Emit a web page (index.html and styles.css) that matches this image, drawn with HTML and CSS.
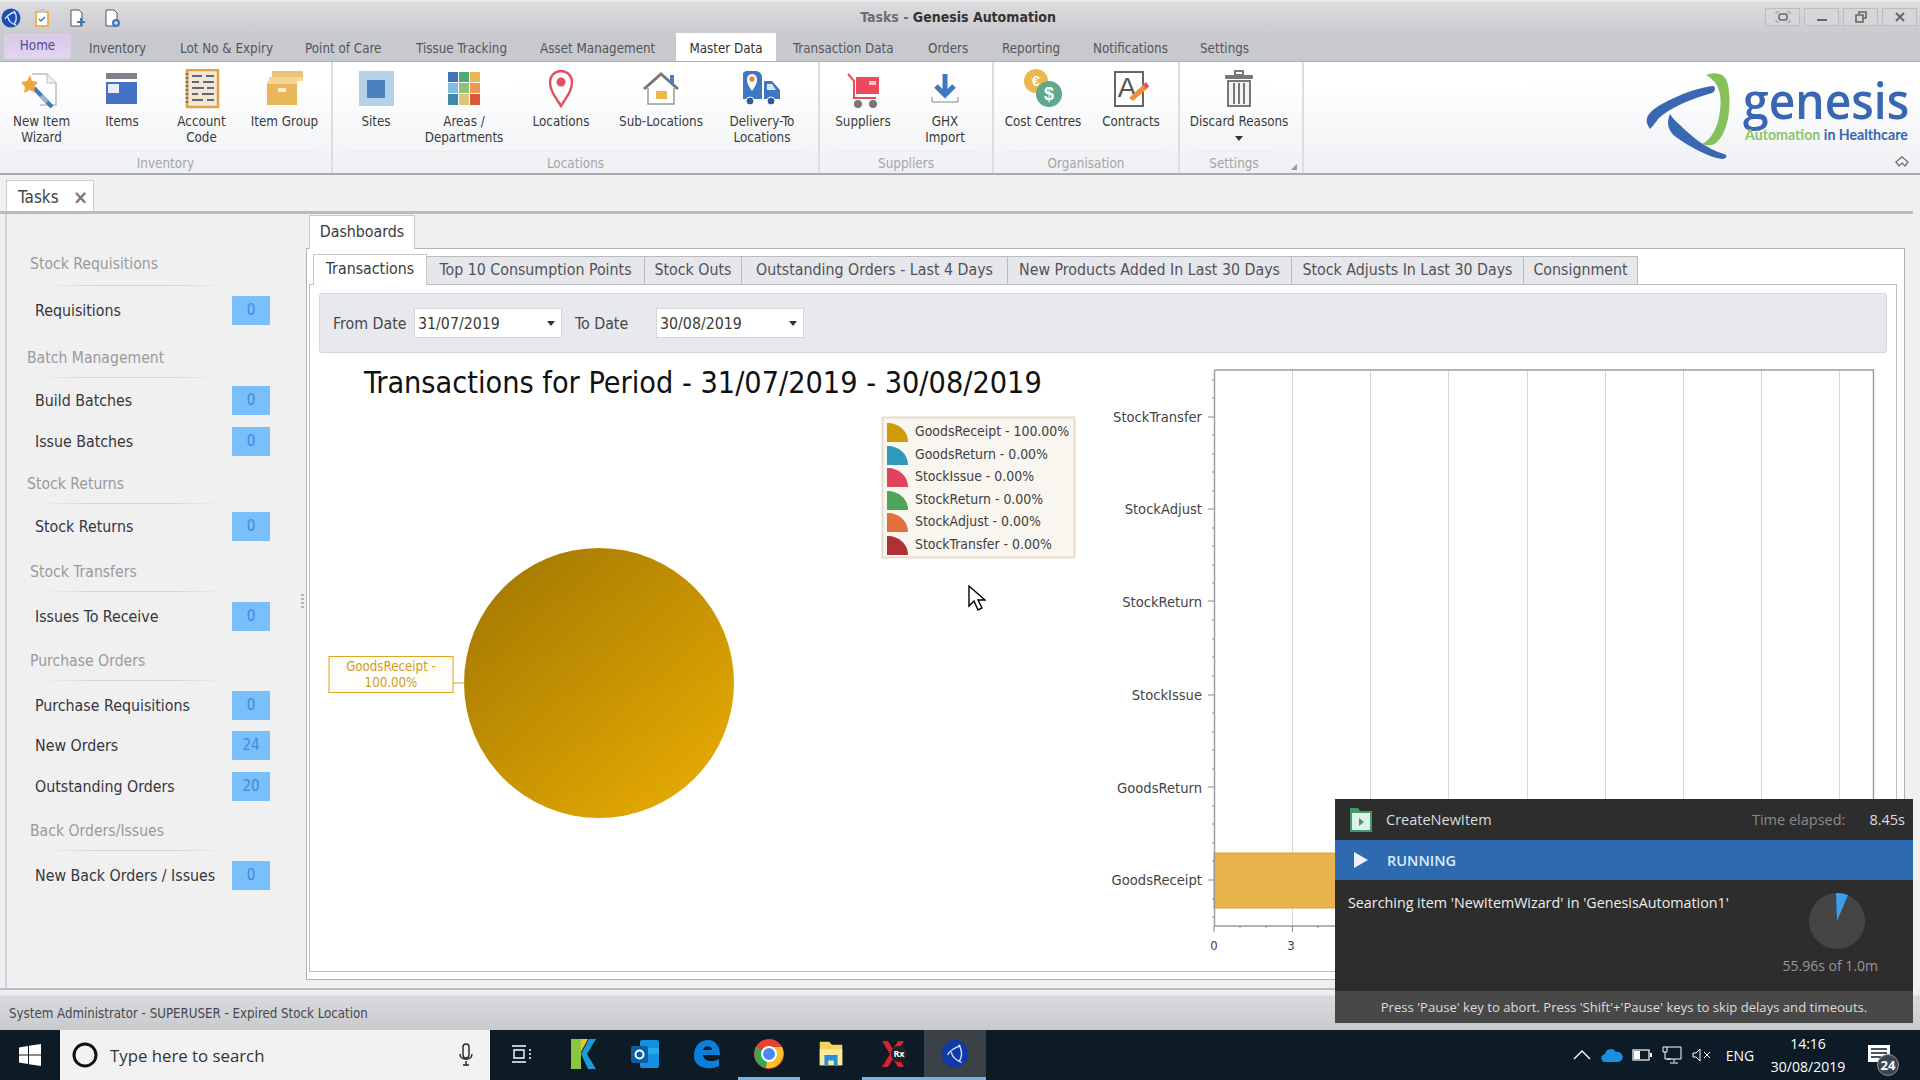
FILE: index.html
```html
<!DOCTYPE html>
<html lang="en">
<head>
	<meta charset="UTF-8" />
	<title>Tasks - Genesis Automation</title>
	<link rel="stylesheet" href="styles.css">
</head>
<body>
<div class="app">
	<!-- window title -->
	<header class="titlebar">
		<div class="qat">
			<svg class="qat-icon" viewBox="0 0 20 20"><circle cx="10" cy="10" r="9.5" fill="#1c4fb0"/><path d="M14 4C10 5 6 8 4 11M7 9c0 4 4 7 8 8M13 3c3 4 3 10 0 13" fill="none" stroke="#dfe9ff" stroke-width="1.3"/></svg>
			<svg class="qat-icon" viewBox="0 0 20 20"><rect x="4" y="4" width="12" height="14" fill="#fff" stroke="#e8b45c" stroke-width="2"/><rect x="7" y="1" width="6" height="4" fill="#c9c9c9"/><path d="m7 11 2 2 4-4" fill="none" stroke="#3f78c2" stroke-width="1.5"/></svg>
			<svg class="qat-icon" viewBox="0 0 20 20"><path d="M4 2h8l3 3v13H4z" fill="#fff" stroke="#555"/><path d="M14 10v8M10 14h8" stroke="#3f78c2" stroke-width="2"/></svg>
			<svg class="qat-icon" viewBox="0 0 20 20"><path d="M4 2h8l3 3v13H4z" fill="#fff" stroke="#555"/><circle cx="14" cy="15" r="4" fill="#3f78c2"/><path d="M14 13v4M12 15h4" stroke="#fff"/></svg>
		</div>
		<div class="wintitle"><span class="wintitle-doc">Tasks - </span>Genesis Automation</div>
		<div class="winbtns">
			<button class="winbtn"><svg viewBox="0 0 16 12" width="16" height="12"><rect x="4" y="3" width="8" height="6" rx="2" fill="none" stroke="#666" stroke-width="1.5"/><path d="M1 3V1h3M12 1h3v2M15 9v2h-3M4 11H1V9" fill="none" stroke="#999"/></svg></button>
			<button class="winbtn"><svg viewBox="0 0 16 12" width="16" height="12"><path d="M3 9h10" stroke="#666" stroke-width="2"/></svg></button>
			<button class="winbtn"><svg viewBox="0 0 16 12" width="16" height="12"><path d="M6 3V1h7v6h-3M3 4h7v7H3z" fill="none" stroke="#666" stroke-width="1.6"/></svg></button>
			<button class="winbtn"><svg viewBox="0 0 16 12" width="16" height="12"><path d="m4 2 8 8M12 2l-8 8" stroke="#666" stroke-width="2"/></svg></button>
		</div>
	</header>

	<nav class="menutabs">
		<a class="mtab mtab-home">Home</a>
		<a class="mtab mt-inv">Inventory</a>
		<a class="mtab mt-lot">Lot No &amp; Expiry</a>
		<a class="mtab mt-poc">Point of Care</a>
		<a class="mtab mt-tis">Tissue Tracking</a>
		<a class="mtab mt-ast">Asset Management</a>
		<a class="mtab mtab-active">Master Data</a>
		<a class="mtab mt-trn">Transaction Data</a>
		<a class="mtab mt-ord">Orders</a>
		<a class="mtab mt-rep">Reporting</a>
		<a class="mtab mt-not">Notifications</a>
		<a class="mtab mt-set">Settings</a>
	</nav>

	<section class="ribbon">
		<div class="rgroup rg-inventory">
			<div class="ritems">
				<div class="ritem">
					<svg class="ricon" viewBox="0 0 44 40"><path d="M12 5h15l9 9v22H20" fill="#fff" stroke="#bdbdbd" stroke-width="1.5"/><path d="M27 5v9h9" fill="#eee" stroke="#bdbdbd"/><path d="m14 19 18 19" stroke="#3e78bd" stroke-width="4"/><path d="m21 27 6 6" stroke="#9fb4cc" stroke-width="4"/><path d="m10 6 2 6 6 1-4 5 1 6-5-3-6 3 1-6-4-5 6-1z" fill="#f0a63c"/></svg>
					<span>New Item<br>Wizard</span>
				</div>
				<div class="ritem">
					<svg class="ricon" viewBox="0 0 44 40"><rect x="6" y="4" width="31" height="6" fill="#7d8288"/><rect x="6" y="13" width="31" height="22" fill="#4472c4"/><rect x="8" y="15" width="11" height="9" fill="#e6eefa"/></svg>
					<span>Items</span>
				</div>
				<div class="ritem">
					<svg class="ricon" viewBox="0 0 44 40"><rect x="7" y="1" width="31" height="37" fill="#f4e6d2" stroke="#e2a24c" stroke-width="2.5"/><g stroke="#5b6a78" stroke-width="2"><path d="M12 7h10M26 7h8M12 13h7M23 13h11M12 19h12M27 19h7M12 25h6M22 25h12M12 31h11M27 31h7"/></g><path d="M7 4v32" stroke="#8a7a60" stroke-width="3" stroke-dasharray="2 2"/></svg>
					<span>Account<br>Code</span>
				</div>
				<div class="ritem">
					<svg class="ricon" viewBox="0 0 44 40"><rect x="9" y="2" width="31" height="6" fill="#eec272"/><rect x="6" y="8" width="34" height="4" fill="#f4d596"/><rect x="4" y="12" width="30" height="24" fill="#e9b65a"/><rect x="4" y="12" width="30" height="3" fill="#f4d596"/><rect x="15" y="19" width="8" height="4" fill="#fbeccd"/></svg>
					<span>Item Group</span>
				</div>
			</div>
			<div class="rlabel">Inventory</div>
		</div>

		<div class="rgroup rg-locations">
			<div class="ritems">
				<div class="ritem">
					<svg class="ricon" viewBox="0 0 44 40"><rect x="5" y="2" width="35" height="35" fill="#b6d0e8"/><rect x="13" y="11" width="18" height="18" fill="#4a80bb"/></svg>
					<span>Sites</span>
				</div>
				<div class="ritem">
					<svg class="ricon" viewBox="0 0 44 40"><g><rect x="6" y="3" width="10" height="10" fill="#3f74b5"/><rect x="17" y="3" width="10" height="10" fill="#4fa77c"/><rect x="28" y="3" width="10" height="10" fill="#eab84f"/><rect x="6" y="14" width="10" height="10" fill="#82bcd8"/><rect x="17" y="14" width="10" height="10" fill="#8cc27a"/><rect x="28" y="14" width="10" height="10" fill="#ee9a52"/><rect x="6" y="25" width="10" height="11" fill="#3e8aa6"/><rect x="17" y="25" width="10" height="11" fill="#d8c878"/><rect x="28" y="25" width="10" height="11" fill="#d9583a"/></g></svg>
					<span>Areas /<br>Departments</span>
				</div>
				<div class="ritem">
					<svg class="ricon" viewBox="0 0 44 40"><path d="M22 37C15 26 11 21 11 13a11 11 0 0 1 22 0c0 8-4 13-11 24z" fill="#fff" stroke="#e4505f" stroke-width="2.4"/><circle cx="22" cy="13" r="4.5" fill="#e4505f"/></svg>
					<span>Locations</span>
				</div>
				<div class="ritem">
					<svg class="ricon" viewBox="0 0 44 40"><path d="M5 20 22 5l17 15" fill="none" stroke="#777" stroke-width="3"/><path d="M9 19v16h26V19" fill="#fff" stroke="#999" stroke-width="1.5"/><rect x="31" y="6" width="4" height="9" fill="#4a80bb"/><rect x="17" y="22" width="11" height="8" fill="#eab84f"/></svg>
					<span>Sub-Locations</span>
				</div>
				<div class="ritem">
					<svg class="ricon" viewBox="0 0 44 40"><path d="M3 4a7 7 0 0 1 7-2h6a6 6 0 0 1 6 6v22H3z" fill="#3f78c2"/><path d="M24 12h8l8 9v9H24z" fill="#3f78c2"/><path d="M27 15h5l4 6h-9z" fill="#d9e6f5"/><circle cx="10" cy="32" r="4" fill="#2f5d99" stroke="#fff"/><circle cx="31" cy="32" r="4" fill="#2f5d99" stroke="#fff"/><path d="M12 22C8 16 7 14 7 10a5 5 0 0 1 10 0c0 4-1 6-5 12z" fill="#f7f7f7"/><circle cx="12" cy="10" r="2.6" fill="#e8803a"/></svg>
					<span>Delivery-To<br>Locations</span>
				</div>
			</div>
			<div class="rlabel">Locations</div>
		</div>

		<div class="rgroup rg-suppliers">
			<div class="ritems">
				<div class="ritem">
					<svg class="ricon" viewBox="0 0 44 40"><path d="M7 5l6 7v17h22" fill="none" stroke="#ea4a5c" stroke-width="2"/><rect x="15" y="8" width="23" height="17" fill="#ea4a5c"/><rect x="28" y="12" width="7" height="4" fill="#f7c4ca"/><circle cx="17" cy="35" r="4" fill="#777"/><circle cx="32" cy="35" r="4" fill="#777"/></svg>
					<span>Suppliers</span>
				</div>
				<div class="ritem">
					<svg class="ricon" viewBox="0 0 44 40"><path d="M22 5v20M13 17l9 9 9-9" fill="none" stroke="#3f78c2" stroke-width="5"/><path d="M9 28v5h26v-5" fill="none" stroke="#888"/></svg>
					<span>GHX<br>Import</span>
				</div>
			</div>
			<div class="rlabel">Suppliers</div>
		</div>

		<div class="rgroup rg-org">
			<div class="ritems">
				<div class="ritem">
					<svg class="ricon" viewBox="0 0 44 40"><circle cx="15" cy="12" r="12" fill="#eab84f"/><text x="15" y="17" class="coin-text">€</text><circle cx="28" cy="25" r="13" fill="#5fa88c"/><text x="28" y="31" class="coin-text coin-big">$</text></svg>
					<span>Cost Centres</span>
				</div>
				<div class="ritem">
					<svg class="ricon" viewBox="0 0 44 40"><rect x="6" y="3" width="28" height="34" fill="#fff" stroke="#666" stroke-width="2"/><text x="18" y="28" class="doc-a">A</text><path d="m20 29 16-15 4 4-16 14z" fill="#f0903c"/><path d="m34 16 3-3 3 4-3 3z" fill="#e4505f"/></svg>
					<span>Contracts</span>
				</div>
			</div>
			<div class="rlabel">Organisation</div>
		</div>

		<div class="rgroup rg-settings">
			<div class="ritems">
				<div class="ritem">
					<svg class="ricon" viewBox="0 0 44 40"><rect x="18" y="2" width="8" height="4" fill="none" stroke="#777" stroke-width="2"/><rect x="8" y="6" width="28" height="4" rx="1" fill="#777"/><path d="M11 12h22v25H11z" fill="#f4f4f4" stroke="#777" stroke-width="2"/><path d="M17 14v21M22 14v21M27 14v21" stroke="#777" stroke-width="2"/></svg>
					<span>Discard Reasons<i class="caret"></i></span>
				</div>
			</div>
			<div class="rlabel">Settings</div>
			<svg class="launcher" viewBox="0 0 6 6"><path d="M6 0v6H0z" fill="#999"/></svg>
		</div>

		<svg class="logo" viewBox="1640 50 276 110">
			<path d="M1647 117c3-12 43-29 65-32 4-1 4 5 0 7-22 6-44 16-54 26-4 6-8 10-8 10-3-4-4-8-3-11z" fill="#3a67b1"/>
			<path d="M1670 113c-4 9-2 17 6 23 14 10 32 20 46 22 5 0 6-4 2-5-18-5-34-19-44-29-5-4-8-8-10-11z" fill="#3a67b1"/>
			<path d="M1706 74c10-4 20-2 22 10 4 21 0 46-10 56-4 5-10 5-16 3 10-5 16-17 18-33 2-15 0-28-14-36z" fill="#86c05a"/>
			<text transform="translate(1743 118) scale(.925 1)" class="logo-name">genesis</text>
			<text x="1745" y="139" class="logo-tag"><tspan class="logo-green">Automation</tspan> in Healthcare</text>
		</svg>
		<svg class="collapse" viewBox="0 0 14 12"><path d="m1 6 6-5 6 5-3 4-3-3-3 3z" fill="none" stroke="#777" stroke-width="1.4"/></svg>
	</section>

	<div class="docbar">
		<div class="doctab"><span>Tasks</span><b class="doctab-x">×</b></div>
	</div>

	<main class="main">
		<aside class="sidebar">
			<section class="sb-group">
				<h3 class="sb-head">Stock Requisitions</h3>
				<div class="sb-row"><span>Requisitions</span><b class="badge">0</b></div>
			</section>
			<section class="sb-group">
				<h3 class="sb-head sb-out">Batch Management</h3>
				<div class="sb-row"><span>Build Batches</span><b class="badge">0</b></div>
				<div class="sb-row"><span>Issue Batches</span><b class="badge">0</b></div>
			</section>
			<section class="sb-group">
				<h3 class="sb-head sb-out">Stock Returns</h3>
				<div class="sb-row"><span>Stock Returns</span><b class="badge">0</b></div>
			</section>
			<section class="sb-group">
				<h3 class="sb-head sb-low">Stock Transfers</h3>
				<div class="sb-row"><span>Issues To Receive</span><b class="badge">0</b></div>
			</section>
			<section class="sb-group">
				<h3 class="sb-head sb-low">Purchase Orders</h3>
				<div class="sb-row"><span>Purchase Requisitions</span><b class="badge">0</b></div>
				<div class="sb-row"><span>New Orders</span><b class="badge">24</b></div>
				<div class="sb-row"><span>Outstanding Orders</span><b class="badge">20</b></div>
			</section>
			<section class="sb-group">
				<h3 class="sb-head sb-low">Back Orders/Issues</h3>
				<div class="sb-row"><span>New Back Orders / Issues</span><b class="badge">0</b></div>
			</section>
		</aside>
		<div class="splitter"><i></i><i></i><i></i><i></i></div>

		<div class="host">
			<div class="hosttab">Dashboards</div>
			<div class="hostpanel">
				<div class="subtabs">
					<div class="subtab subtab-active">Transactions</div>
					<div class="subtab st-top">Top 10 Consumption Points</div>
					<div class="subtab st-out">Stock Outs</div>
					<div class="subtab st-ord">Outstanding Orders - Last 4 Days</div>
					<div class="subtab st-new">New Products Added In Last 30 Days</div>
					<div class="subtab st-adj">Stock Adjusts In Last 30 Days</div>
					<div class="subtab st-con">Consignment</div>
				</div>
				<div class="subpanel">
					<div class="filters">
						<label class="flabel">From Date</label>
						<div class="datebox"><span>31/07/2019</span><i class="caret"></i></div>
						<label class="flabel flabel-to">To Date</label>
						<div class="datebox"><span>30/08/2019</span><i class="caret"></i></div>
					</div>
					<svg class="charts" width="1582" height="600" viewBox="314 360 1582 600">
						<text x="364" y="393" class="chart-title">Transactions for Period - 31/07/2019 - 30/08/2019</text>

						<defs>
							<linearGradient id="pieFill" x1="0.15" y1="0.1" x2="0.85" y2="0.9">
								<stop offset="0" stop-color="#a87c02"/>
								<stop offset="1" stop-color="#e3a802"/>
							</linearGradient>
						</defs>
						<circle cx="599" cy="683" r="135" fill="url(#pieFill)"/>
						<path d="M453 683h12" stroke="#dba520"/>
						<rect x="329" y="656.5" width="124" height="36" fill="#fffdf8" stroke="#dba520"/>
						<text x="391" y="671" class="pie-label">GoodsReceipt -</text>
						<text x="391" y="687" class="pie-label">100.00%</text>

						<rect x="882.5" y="417.5" width="192" height="140" fill="#f9f5ef" stroke="#e6dcc9" stroke-width="2"/>
						<g class="legend">
							<path d="M887 442v-19c12 0 21 8 21 19z" fill="#cf9a06"/><text x="915" y="436">GoodsReceipt - 100.00%</text>
							<path d="M887 465v-19c12 0 21 8 21 19z" fill="#2f9ab8"/><text x="915" y="459">GoodsReturn - 0.00%</text>
							<path d="M887 487v-19c12 0 21 8 21 19z" fill="#e0435c"/><text x="915" y="481">StockIssue - 0.00%</text>
							<path d="M887 510v-19c12 0 21 8 21 19z" fill="#4ca65a"/><text x="915" y="504">StockReturn - 0.00%</text>
							<path d="M887 532v-19c12 0 21 8 21 19z" fill="#e2703a"/><text x="915" y="526">StockAdjust - 0.00%</text>
							<path d="M887 555v-19c12 0 21 8 21 19z" fill="#b03038"/><text x="915" y="549">StockTransfer - 0.00%</text>
						</g>

						<g class="grid">
							<path d="M1292.5 370v556M1370.5 370v556M1448.5 370v556M1527.5 370v556M1605.5 370v556M1683.5 370v556M1761.5 370v556M1839.5 370v556"/>
						</g>
						<rect x="1214" y="853" width="400" height="55" fill="#e8b24c" stroke="#dc9f3a"/>
						<path d="M1214.5 370h659v556M1214.5 370v556h659" fill="none" stroke="#9a9a9a" stroke-width="1.4"/>
						<g class="ticks">
							<path d="M1208 417h6M1208 509h6M1208 601h6M1208 695h6M1208 787h6M1208 880h6M1214 926v6M1292.5 926v6"/>
							<path d="M1212 380h2M1212 398h2M1212 435h2M1212 454h2M1212 472h2M1212 491h2M1212 528h2M1212 546h2M1212 565h2M1212 583h2M1212 620h2M1212 639h2M1212 657h2M1212 676h2M1212 713h2M1212 732h2M1212 750h2M1212 769h2M1212 806h2M1212 824h2M1212 843h2M1212 861h2M1212 899h2M1212 917h2M1240 926v2M1266 926v2M1318 926v2"/>
						</g>
						<g class="axis-cat">
							<text x="1202" y="421.5">StockTransfer</text>
							<text x="1202" y="514">StockAdjust</text>
							<text x="1202" y="606.5">StockReturn</text>
							<text x="1202" y="700">StockIssue</text>
							<text x="1202" y="792.5">GoodsReturn</text>
							<text x="1202" y="885">GoodsReceipt</text>
						</g>
						<g class="axis-val">
							<text x="1214" y="950">0</text>
							<text x="1291" y="950">3</text>
						</g>
					</svg>
				</div>
			</div>
		</div>
	</main>

	<footer class="statusbar">System Administrator - SUPERUSER - Expired Stock Location</footer>

	<div class="taskbar">
		<div class="tb-start">
			<svg viewBox="0 0 22 22" width="22" height="22"><path d="M0 3.5 9 2v8.5H0zM10 1.8 22 0v10.5H10zM0 11.5h9V20l-9-1.5zM10 11.5h12V22l-12-1.8z" fill="#fff"/></svg>
		</div>
		<div class="tb-search">
			<svg viewBox="0 0 30 30" width="30" height="30"><circle cx="15" cy="15" r="11" fill="none" stroke="#111" stroke-width="3"/></svg>
			<span class="tb-search-text">Type here to search</span>
			<svg class="tb-mic" viewBox="0 0 16 24" width="16" height="24"><rect x="5" y="1" width="6" height="14" rx="3" fill="none" stroke="#222" stroke-width="1.4"/><path d="M2 11c0 7 12 7 12 0M8 18v4M5 22h6" fill="none" stroke="#222" stroke-width="1.4"/></svg>
		</div>
		<div class="tb-cell tb-view">
			<svg viewBox="0 0 24 24" width="24" height="24"><path d="M3 4h14M3 20h14M5 8h10v8H5zM20 8h2M20 12h2M20 16h2" fill="none" stroke="#fff" stroke-width="1.4"/></svg>
		</div>
		<div class="tb-cell">
			<svg viewBox="0 0 28 32" width="28" height="32"><path d="M2 1h10v30H2z" fill="#8cc63f"/><path d="M12 16 20 1h7l-9 15 9 15h-8z" fill="#1c9ad6"/><path d="M12 14 19 1h-7z" fill="#f2c230"/></svg>
		</div>
		<div class="tb-cell">
			<svg viewBox="0 0 32 32" width="32" height="32"><rect x="11" y="2" width="19" height="28" rx="2" fill="#1490df"/><path d="M11 10h19v6H11z" fill="#28a8ea"/><rect x="2" y="8" width="17" height="17" rx="2" fill="#0a5ea8"/><circle cx="10.5" cy="16.5" r="4" fill="none" stroke="#fff" stroke-width="2"/></svg>
		</div>
		<div class="tb-cell">
			<svg viewBox="0 0 32 32" width="32" height="34"><path d="M3 18C3 7 10 2 17 2c7 0 12 6 12 15H12c0 6 9 8 16 4v7c-10 5-25 2-25-10zm9-6h9c0-5-8-5-9 0z" fill="#0a7fdc"/></svg>
		</div>
		<div class="tb-cell tb-open">
			<svg viewBox="0 0 32 32" width="32" height="32"><circle cx="16" cy="16" r="15" fill="#e5432f"/><path d="M3 9a15 15 0 0 0 10 21l6-12z" fill="#35a853"/><path d="M13 30A15 15 0 0 0 29 9H16z" fill="#fbc02d"/><circle cx="16" cy="16" r="7" fill="#4a8af4" stroke="#fff" stroke-width="2"/></svg>
		</div>
		<div class="tb-cell">
			<svg viewBox="0 0 32 32" width="30" height="30"><path d="M4 3h10l3 3h11v22H4z" fill="#f3d35c"/><path d="M4 11h24v17H4z" fill="#fbe9a0"/><path d="M9 17h14v11h-4v-5h-6v5H9z" fill="#2b8edb"/></svg>
		</div>
		<div class="tb-cell tb-open">
			<svg viewBox="0 0 32 32" width="32" height="32"><path d="M5 3h6l5 8 5-8h6l-8 13 8 13h-6l-5-8-5 8H5l8-13z" fill="#d5222e"/><circle cx="22" cy="16" r="8" fill="#222"/><text x="22" y="19" class="rx-text">Rx</text></svg>
		</div>
		<div class="tb-cell tb-active">
			<svg viewBox="0 0 32 32" width="30" height="32"><ellipse cx="16" cy="16" rx="14" ry="15" fill="#0f3aa8"/><path d="M22 7C16 9 11 12 8 17M12 14c1 5 6 9 11 11M20 6c4 6 4 14 0 18" fill="none" stroke="#d9e6ff" stroke-width="1.4"/></svg>
		</div>
		<div class="tray">
			<div class="tray-cell"><svg viewBox="0 0 18 12" width="18" height="12"><path d="m1 10 8-8 8 8" fill="none" stroke="#fff" stroke-width="1.4"/></svg></div>
			<div class="tray-cell"><svg viewBox="0 0 22 14" width="22" height="14"><path d="M5 14a4 4 0 0 1-1-8 6 6 0 0 1 11-2 5 5 0 0 1 3 10z" fill="#1a8fe0"/></svg></div>
			<div class="tray-cell"><svg viewBox="0 0 20 12" width="20" height="12"><rect x="1" y="1" width="16" height="10" fill="none" stroke="#fff" stroke-width="1.2"/><rect x="2" y="2" width="6" height="8" fill="#fff"/><rect x="18" y="4" width="2" height="4" fill="#fff"/></svg></div>
			<div class="tray-cell"><svg viewBox="0 0 20 18" width="20" height="18"><path d="M5 1h14v12H5M1 1h4v5H1zM12 13v3M8 17h8M3 6v7h6" fill="none" stroke="#fff"/></svg></div>
			<div class="tray-cell"><svg viewBox="0 0 20 14" width="20" height="14"><path d="M1 5h3l4-4v12L4 9H1z" fill="none" stroke="#fff"/><path d="m12 4 6 6M18 4l-6 6" stroke="#fff"/></svg></div>
			<div class="tray-lang">ENG</div>
			<div class="tray-clock"><span>14:16</span><span>30/08/2019</span></div>
			<div class="tray-notif">
				<svg viewBox="0 0 22 20" width="22" height="20"><path d="M0 0h22v17H0z" fill="#fff"/><path d="M3 4h16M3 8h16M3 12h10" stroke="#0d1b26" stroke-width="1.5"/></svg>
				<b class="notif-count">24</b>
			</div>
		</div>
	</div>

	<!-- automation popup sits over the window -->
	<aside class="runner">
		<div class="runner-head">
			<svg viewBox="0 0 24 26" width="24" height="26"><path d="M1 1h8l2 3h12v21H1z" fill="#3f9c68"/><rect x="3" y="6" width="18" height="17" fill="#e0f2e7"/><path d="m10 11 5 4-5 4z" fill="#3f9c68"/></svg>
			<span class="runner-name">CreateNewItem</span>
			<span class="runner-elapsed">Time elapsed:</span>
			<span class="runner-time">8.45s</span>
		</div>
		<div class="runner-state">
			<svg viewBox="0 0 14 16" width="14" height="16"><path d="M0 0l14 8-14 8z" fill="#eaf2fb"/></svg>
			<span>RUNNING</span>
		</div>
		<div class="runner-body">
			<p class="runner-msg">Searching item 'NewItemWizard' in 'GenesisAutomation1'</p>
			<div class="runner-progress">
				<svg class="runner-pie" viewBox="0 0 56 56" width="56" height="56"><circle cx="28" cy="28" r="28" fill="#454545"/><path d="M28 28 27 0a28 28 0 0 1 12 2z" fill="#3aa0ee"/></svg>
				<span>55.96s of 1.0m</span>
			</div>
		</div>
		<div class="runner-foot">Press 'Pause' key to abort. Press 'Shift'+'Pause' keys to skip delays and timeouts.</div>
	</aside>

	<svg class="cursor" viewBox="0 0 18 26" width="18" height="26"><path d="M1 1v20l5-5 4 9 4-2-4-8h7z" fill="#fff" stroke="#000" stroke-width="1.4"/></svg>
</div>
</body>
</html>
```

FILE: styles.css
```css
* {
	box-sizing: border-box;
}

html,
body {
	margin: 0;
	height: 100%;
	overflow: hidden;
}

body {
	font-family: "DejaVu Sans Condensed", "DejaVu Sans", sans-serif;
	font-size: 13.3px;
	color: #3b3b3b;
}

.app {
	position: relative;
	width: 1920px;
	height: 1080px;
	display: flex;
	flex-direction: column;
	background: #f0f0f0;
}

/* title bar */
.titlebar {
	height: 33px;
	display: grid;
	grid-template-columns: 1fr auto 1fr;
	align-items: start;
	background: linear-gradient(#dcdcde, #cbcbd0);
	border-top: 2px solid #e8e8ea;
}

.qat {
	display: flex;
	gap: 15px;
	padding: 6px 0 0 1px;
}

.qat-icon {
	width: 20px;
	height: 20px;
}

.qat-icon:first-child {
	margin-right: -4px;
}

.wintitle {
	padding-top: 7px;
	margin-right: 4px;
	font-weight: 700;
	color: #333;
	font-size: 14px;
}

.wintitle-doc {
	color: #6d6d72;
}

.winbtns {
	display: flex;
	gap: 4px;
	justify-content: flex-end;
	padding: 6px 3px 0 0;
}

.winbtn {
	width: 35px;
	height: 18px;
	padding: 0;
	border: 1px solid #bdbdc0;
	background: #d6d6d9;
	display: flex;
	align-items: center;
	justify-content: center;
}

/* ribbon tabs */
.menutabs {
	height: 28px;
	display: flex;
	align-items: flex-end;
	padding-left: 4px;
	background: #c8c9ce;
}

.mtab {
	height: 26px;
	line-height: 28px;
	color: #55565b;
	white-space: nowrap;
}

.mtab-home {
	width: 67px;
	height: 25px;
	line-height: 22px;
	margin-bottom: 2px;
	text-align: center;
	color: #524a90;
	background: linear-gradient(#d9c8ea, #e3d5f0);
	border: 1px solid #d8d2e2;
}

.mt-inv { margin-left: 18px; width: 91px; }
.mt-lot { width: 125px; }
.mt-poc { width: 111px; }
.mt-tis { width: 124px; }
.mt-ast { width: 136px; }
.mt-trn { margin-left: 17px; width: 135px; }
.mt-ord { width: 74px; }
.mt-rep { width: 91px; }
.mt-not { width: 107px; }
.mt-set { width: 60px; }

.mtab-active {
	width: 100px;
	height: 28px;
	line-height: 32px;
	text-align: center;
	color: #333;
	background: #fff;
}

/* ribbon */
.ribbon {
	position: relative;
	height: 114px;
	display: flex;
	background: linear-gradient(#fff 20%, #eef0f3);
	border-top: 1px solid #aeb0b5;
	border-bottom: 2px solid #a9abb0;
}

.rgroup {
	position: relative;
	display: flex;
	flex-direction: column;
	border-right: 2px solid #dcdde0;
}

.ritems {
	flex: 1;
	display: grid;
	padding-top: 7px;
}

.rg-inventory { width: 333px; }
.rg-inventory .ritems { grid-template-columns: 83px 78px 81px 85px; }
.rg-locations { width: 487px; }
.rg-locations .ritems { grid-template-columns: 86px 90px 104px 96px 106px; }
.rg-suppliers { width: 174px; }
.rg-suppliers .ritems { grid-template-columns: 86px 78px; }
.rg-org { width: 186px; }
.rg-org .ritems { grid-template-columns: 98px 78px; }
.rg-settings { width: 124px; }
.rg-settings .ritems { grid-template-columns: 118px; }

.ritem {
	display: flex;
	flex-direction: column;
	align-items: center;
	text-align: center;
	line-height: 16px;
	color: #3b3b3b;
	white-space: nowrap;
}

.ricon {
	width: 44px;
	height: 40px;
	margin-bottom: 5px;
}

.caret {
	display: block;
	width: 0;
	height: 0;
	margin: 6px auto 0;
	border: 4px solid transparent;
	border-top: 5px solid #333;
	border-bottom: 0;
}

.rlabel {
	margin: 0 14px;
	height: 22px;
	line-height: 24px;
	text-align: center;
	font-size: 13.4px;
	color: #a3a5a8;
	border-top: 1px solid #eceded;
}

.rg-settings .rlabel {
	margin-right: 28px;
}

.launcher {
	position: absolute;
	right: 5px;
	bottom: 3px;
	width: 6px;
	height: 6px;
}

.logo {
	position: absolute;
	right: 4px;
	top: -11px;
	width: 276px;
	height: 110px;
}

.logo-name {
	font-family: "Open Sans", sans-serif;
	font-size: 50px;
	font-weight: 600;
	fill: #3a67b1;
}

.logo-tag {
	font-family: "Lato", sans-serif;
	font-size: 14.2px;
	font-weight: 700;
	fill: #3a67b1;
}

.logo-green {
	fill: #8fc46a;
}

.collapse {
	position: absolute;
	right: 11px;
	bottom: 5px;
	width: 14px;
	height: 12px;
}

.coin-text {
	font-family: "Liberation Sans", sans-serif;
	font-size: 14px;
	font-weight: 700;
	fill: #fff;
	text-anchor: middle;
}

.coin-big {
	font-size: 18px;
}

.doc-a {
	font-family: "Liberation Sans", sans-serif;
	font-size: 28px;
	fill: #555;
	text-anchor: middle;
}

/* document tab */
.docbar {
	height: 36px;
	padding: 5px 0 0 6px;
	background: #f0f0f0;
}

.doctab {
	width: 88px;
	height: 32px;
	display: flex;
	align-items: center;
	justify-content: space-between;
	padding: 0 5px 0 11px;
	background: #fff;
	border: 1px solid #c8ccd0;
	border-bottom: 0;
	font-size: 17px;
	color: #444;
}

.doctab-x {
	font-size: 20px;
	color: #777;
}

/* body of the window */
.main {
	flex: 1;
	min-height: 0;
	display: flex;
	padding: 0 0 0 5px;
	border-top: 3px solid #b5bcc3;
	border-bottom: 2px solid #b6bcc8;
	margin-right: 7px;
}

.sidebar {
	width: 294px;
	padding: 38px 0 0 23px;
	font-size: 15.8px;
	border-left: 2px solid #cdd5dc;
}

.sb-group {
	margin-bottom: 18px;
}

.sb-group:first-child {
	margin-bottom: 21px;
}

.sb-group:nth-child(2) {
	margin-bottom: 16px;
}

.sb-group:nth-child(3) {
	margin-bottom: 19px;
}

.sb-head {
	margin: 0 0 8px;
	height: 32px;
	line-height: 24px;
	font-size: 15.6px;
	font-weight: 400;
	color: #9a9a9c;
	position: relative;
}

.sb-head::after {
	content: "";
	position: absolute;
	left: 11px;
	width: 185px;
	bottom: 0;
	height: 1px;
	background: linear-gradient(90deg, #f0f0f0, #d4d4d6 30%, #d4d4d6 70%, #f0f0f0);
}

.sb-group:first-child .sb-head {
	height: 34px;
	margin-bottom: 10px;
}

.sb-out {
	margin-left: -3px;
}

.sb-low {
	margin-bottom: 10px;
}

.sb-row {
	display: flex;
	align-items: center;
	justify-content: space-between;
	width: 240px;
	height: 29px;
	padding-left: 5px;
	margin-bottom: 11.5px;
	color: #35373c;
}

.badge {
	width: 38px;
	height: 29px;
	line-height: 28px;
	text-align: center;
	font-weight: 400;
	font-size: 15px;
	color: #3d8bdc;
	background: #78bffc;
}

.splitter {
	width: 7px;
	display: flex;
	flex-direction: column;
	gap: 2px;
	align-items: center;
	padding-top: 380px;
}

.splitter i {
	width: 3px;
	height: 2px;
	background: #b5b5b5;
}

.host {
	width: 1599px;
	display: flex;
	flex-direction: column;
	margin-bottom: 8px;
	padding-top: 1px;
}

.hosttab {
	width: 106px;
	height: 34px;
	margin-left: 3px;
	margin-bottom: -1px;
	line-height: 32px;
	text-align: center;
	font-size: 15.8px;
	background: #fff;
	border: 1px solid #c5c8cc;
	border-bottom: 0;
	position: relative;
	z-index: 1;
}

.hostpanel {
	flex: 1;
	min-height: 0;
	display: flex;
	flex-direction: column;
	padding: 5px 7px 7px 2px;
	background: #fff;
	border: 1px solid #b0b3b8;
}

.subtabs {
	height: 31px;
	display: flex;
	align-items: flex-end;
	margin-bottom: -1px;
	padding-left: 4px;
	position: relative;
	z-index: 1;
}

.subtab {
	height: 29px;
	line-height: 26px;
	text-align: center;
	font-size: 15.8px;
	color: #505258;
	background: #e6e7ea;
	border: 1px solid #b8babf;
	border-left: 0;
	white-space: nowrap;
}

.subtab-active {
	width: 114px;
	height: 31px;
	line-height: 27px;
	color: #3b3b3b;
	background: #fff;
	border: 1px solid #c5c8cc;
	border-bottom: 0;
}

.st-top { width: 218px; }
.st-out { width: 97px; }
.st-ord { width: 266px; }
.st-new { width: 284px; }
.st-adj { width: 232px; }
.st-con { width: 114px; }

.subpanel {
	flex: 1;
	min-height: 0;
	padding: 8px 9px 0 9px;
	border: 1px solid #bdbfc3;
	overflow: hidden;
}

.filters {
	height: 60px;
	display: flex;
	align-items: center;
	padding-left: 13px;
	background: #e7e9ec;
	border: 1px solid #d3d6da;
	border-radius: 3px;
	font-size: 15.8px;
}

.flabel {
	width: 81px;
	color: #45474c;
}

.flabel-to {
	margin-left: 13px;
}

.datebox {
	width: 148px;
	height: 30px;
	display: flex;
	align-items: center;
	justify-content: space-between;
	padding: 0 6px 0 3px;
	background: #fff;
	border: 1px solid #d3d6da;
}

.datebox .caret {
	margin: 0;
}

.charts {
	display: block;
	margin: 7px 0 0 -5px;
}

.chart-title {
	font-size: 30.3px;
	fill: #111;
}

.pie-label {
	font-size: 13.2px;
	fill: #d09c28;
	text-anchor: middle;
}

.legend text {
	font-size: 13.9px;
	fill: #3f3f3f;
}

.grid path {
	stroke: #d6d6d6;
	fill: none;
}

.ticks path {
	stroke: #8a8a8a;
	fill: none;
}

.axis-cat text {
	font-size: 14.6px;
	fill: #444;
	text-anchor: end;
}

.axis-val text {
	font-size: 13px;
	fill: #444;
	text-anchor: middle;
}

/* status bar */
.statusbar {
	height: 40px;
	line-height: 47px;
	padding-left: 9px;
	font-size: 13.2px;
	color: #45474c;
	background: linear-gradient(#eeeef0 5px, #dadadd 6px, #c9cace);
}

/* windows taskbar */
.taskbar {
	height: 50px;
	display: flex;
	align-items: stretch;
	background: #0d1b26;
	color: #fff;
	font-family: "Open Sans", sans-serif;
}

.tb-start {
	width: 60px;
	display: flex;
	align-items: center;
	justify-content: center;
}

.tb-search {
	width: 430px;
	display: flex;
	align-items: center;
	padding: 0 16px 0 10px;
	background: #f2f2f2;
	color: #333;
}

.tb-search-text {
	margin-left: 10px;
	font-size: 16.8px;
}

.tb-mic {
	margin-left: auto;
}

.tb-cell {
	width: 62px;
	display: flex;
	align-items: center;
	justify-content: center;
	border-bottom: 3px solid transparent;
}

.tb-view {
	width: 62px;
}

.tb-open {
	border-bottom-color: #7fb0dc;
}

.tb-active {
	background: #3a4248;
	border-bottom-color: #7fb0dc;
}

.rx-text {
	font-family: "Open Sans", sans-serif;
	font-size: 9px;
	font-weight: 700;
	fill: #fff;
	text-anchor: middle;
}

.tray {
	margin-left: auto;
	padding-right: 15px;
	display: flex;
	align-items: center;
}

.tray-cell {
	width: 30px;
	display: flex;
	justify-content: center;
}

.tray-lang {
	width: 46px;
	text-align: center;
	font-size: 14px;
}

.tray-clock {
	width: 90px;
	display: flex;
	flex-direction: column;
	align-items: center;
	gap: 4px;
	font-size: 14px;
	line-height: 19px;
}

.tray-notif {
	position: relative;
	width: 52px;
	height: 50px;
	display: flex;
	align-items: center;
	justify-content: center;
}

.notif-count {
	position: absolute;
	left: 24px;
	top: 24px;
	width: 22px;
	height: 22px;
	line-height: 20px;
	text-align: center;
	font-size: 13px;
	border-radius: 50%;
	background: #3b4650;
	border: 1px solid #8b949b;
}

/* automation popup */
.runner {
	position: absolute;
	left: 1335px;
	top: 799px;
	width: 578px;
	height: 224px;
	display: flex;
	flex-direction: column;
	background: #2d2d2d;
	font-family: "Open Sans", sans-serif;
	color: #eee;
}

.runner-head {
	height: 41px;
	display: flex;
	align-items: center;
	padding: 0 8px 0 14px;
	font-size: 14.5px;
}

.runner-name {
	margin-left: 13px;
	color: #ddd;
}

.runner-elapsed {
	margin-left: auto;
	color: #8a8a8a;
}

.runner-time {
	margin-left: 24px;
	color: #ddd;
}

.runner-state {
	height: 40px;
	display: flex;
	align-items: center;
	gap: 19px;
	padding-left: 19px;
	background: #2d6ab0;
	font-size: 14.5px;
	font-weight: 600;
	color: #dcecfb;
}

.runner-body {
	flex: 1;
	min-height: 0;
	display: flex;
	justify-content: space-between;
	padding: 13px 35px 0 13px;
}

.runner-msg {
	margin: 0;
	font-size: 14.3px;
}

.runner-progress {
	display: flex;
	flex-direction: column;
	align-items: center;
	gap: 7px;
	font-size: 14px;
	color: #989898;
}

.runner-pie {
	margin-left: 14px;
}

.runner-foot {
	height: 32px;
	line-height: 32px;
	text-align: center;
	font-size: 13.1px;
	color: #ddd;
	background: #484848;
}

.cursor {
	position: absolute;
	left: 968px;
	top: 585px;
}
```
